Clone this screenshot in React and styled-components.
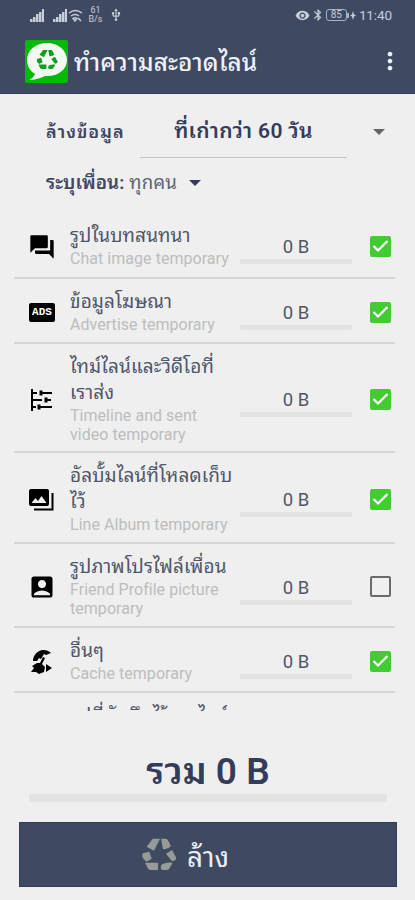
import React from "react";
import styled, { createGlobalStyle } from "styled-components";
import { MdForum, MdAccountBox, MdMoreVert, MdBluetooth, MdUsb, MdVisibility } from "react-icons/md";

const GlobalStyle = createGlobalStyle`
    *{
        box-sizing: border-box;
    }
    body{
        margin: 0;
        background-color: #efefef;
        font-family: Roboto, "Noto Sans Thai Looped", "Noto Looped Thai", Loma, Waree, Garuda, "Noto Sans Thai", "Noto Sans", sans-serif;
    }
    svg{
        display: block;
        flex-shrink: 0;
    }
`

const Screen = styled.div`
    width: 415px;
    height: 900px;
    display: flex;
    flex-direction: column;
    overflow: hidden;
    background-color: #efefef;
    color: #3e4760;
`

const Header = styled.header`
    height: 94px;
    background-color: #3f4962;
    border-bottom: 1px solid #343d57;
    color: #eef1f8;
`

const StatusBar = styled.div`
    height: 30px;
    display: flex;
    justify-content: space-between;
    padding: 0 23px 0 30px;
    color: #c9cedb;
`

const StatusGroup = styled.div`
    display: flex;
    align-items: center;
    gap: ${({ $gap }) => $gap}px;
`

const SignalGap = styled.span`
    width: 8px;
`

const Speed = styled.div`
    width: 15px;
    font-size: 9px;
    line-height: 9px;
    text-align: center;
    margin: 0 6px 0 5px;
`

const Battery = styled.div`
    width: 21px;
    height: 12px;
    border: 1px solid #a9b0c2;
    border-radius: 3px;
    font-size: 10px;
    line-height: 10px;
    text-align: center;
`

const BatteryTip = styled.span`
    width: 2px;
    height: 5px;
    background-color: #a9b0c2;
    margin-left: -1px;
`

const Clock = styled.span`
    font-size: 13.5px;
    letter-spacing: -.1px;
    margin-left: 2px;
`

const AppBar = styled.div`
    height: 64px;
    display: flex;
    align-items: center;
    padding: 0 11px 2px 24px;
`

const Title = styled.h1`
    flex: 1;
    margin: 4px 0 0 5px;
    font-size: 24.3px;
    font-weight: 500;
    line-height: 34px;
    letter-spacing: .1px;
    white-space: nowrap;
`

const Filter = styled.div`
    height: 65px;
    display: flex;
    padding-left: 46px;
`

const FilterLabel = styled.div`
    width: 94px;
    font-size: 18px;
    font-weight: 600;
    line-height: 24px;
    letter-spacing: 1px;
    padding-top: 26px;
    white-space: nowrap;
`

const FilterSelect = styled.div`
    width: 207px;
    height: 64px;
    border-bottom: 1px solid #c5c5c5;
    font-size: 21px;
    font-weight: 600;
    line-height: 26px;
    letter-spacing: .35px;
    padding-top: 24px;
    text-align: center;
    white-space: nowrap;
    color: #343c5a;
`

const Caret = styled.span`
    width: 0;
    height: 0;
    border-left: 6px solid transparent;
    border-right: 6px solid transparent;
    border-top: 6px solid ${({ $color }) => $color};
    margin: ${({ $margin }) => $margin};
`

const Friends = styled.div`
    height: 53px;
    display: flex;
    align-items: flex-start;
    padding: 12px 0 0 46px;
    font-size: 18.7px;
    line-height: 24px;
    letter-spacing: .1px;
    white-space: nowrap;
    color: #62646d;
    b{
        font-weight: 600;
        color: #3e4760;
        margin-right: 5px;
    }
`

const List = styled.div`
    height: 499px;
    overflow: hidden;
    padding: 0 20px 0 14px;
`

const Row = styled.div`
    height: ${({ $height }) => $height}px;
    display: flex;
    align-items: center;
    border-bottom: 2px solid #d6d6d6;
`

const IconCell = styled.div`
    width: 56px;
    display: flex;
    justify-content: center;
    padding-top: 4px;
    color: #000;
`

const Texts = styled.div`
    width: 170px;
    padding-top: 2px;
    white-space: nowrap;
`

const Name = styled.div`
    font-size: 19px;
    line-height: 26px;
    color: #50566a;
    letter-spacing: .1px;
`

const Detail = styled.div`
    font-size: 16px;
    line-height: 19px;
    letter-spacing: .04px;
    color: #bdbdbd;
`

const Size = styled.div`
    width: 112px;
    padding-top: 11px;
    text-align: center;
    font-size: 18.5px;
    line-height: 23px;
    color: #50566a;
`

const Track = styled.div`
    height: ${({ $height }) => $height}px;
    border-radius: 1px;
    background-color: #e3e3e3;
`

const Check = styled.div`
    width: 21px;
    height: 21px;
    margin: ${({ $on }) => ($on ? 4 : 2)}px 0 0 18px;
    border-radius: 2px;
    border: 2px solid ${({ $on }) => ($on ? "#42cc32" : "#6a6a6a")};
    background-color: ${({ $on }) => ($on ? "#42cc32" : "transparent")};
`

const AdsBadge = styled.div`
    width: 26px;
    height: 19px;
    border-radius: 2px;
    background-color: #000;
    color: #fff;
    font: bold 11px/19px "Liberation Mono", monospace;
    text-align: center;
`

const Total = styled.div`
    height: 111px;
    padding: 38px 28px 0 29px;
    text-align: center;
    font-size: 37px;
    font-weight: 600;
    line-height: 45px;
    color: #343c5a;
`

const CleanButton = styled.button`
    width: 378px;
    height: 65px;
    margin-left: 19px;
    display: flex;
    align-items: center;
    border: 1px solid #343d57;
    background-color: #3f4962;
    color: #e8edf8;
    font-family: inherit;
    font-size: 28px;
    padding: 0 0 0 121px;
    gap: 10px;
`

const RecyclePaths = () => (
    <>
        <path d="M456 321h22l-18 36-22-12z" />
        <path d="M481 321h14q5 0 7 5l9 18q-12 11-24 8z" />
        <path d="M426 365l20-5 7 21-15 9q-17-10-12-25z" />
        <path d="M433 393h39v22h-22q-6 0-9-6z" />
        <path d="M484 398q14-8 32-5l-9 16q-3 6-9 6h-14q-8-8 0-17z" />
        <path d="M496 366l18-11 12 22q2 10-12 12z" />
    </>
)

const Recycle = () => (
    <svg width="36" height="34" viewBox="421 319 108 102" fill="#979b98">
        <RecyclePaths />
    </svg>
)

const Logo = () => (
    <svg width="45" height="45" viewBox="0 0 45 45">
        <rect x="1" y="1" width="43" height="43" rx="2" fill="#05b909" />
        <path d="M23 4C12 4 3 11 3 21c0 6 3 11 8 14-1 3-4 5-6 6 6 0 12-2 16-4 12 1 22-6 22-16S34 4 23 4z" fill="#f4f8f2" />
        <svg x="12" y="10" width="22" height="21" viewBox="421 317 108 102" fill="#119d22">
            <RecyclePaths />
        </svg>
    </svg>
)

const Signal = () => (
    <svg width="15" height="13" viewBox="0 0 15 13" fill="currentColor">
        <path d="M0 10h2.500v3H0zM3 8h2.500v5H3zM6 5h2.500v8H6zM9 3h2.500v10H9zM12 0h2v13h-2z" />
    </svg>
)

const Wifi = () => (
    <svg width="15" height="13" viewBox="0 0 15 13" fill="none" stroke="currentColor" strokeWidth="1.5">
        <path d="M1 4q6.500-5 13 0M3 7q4.500-3 8 0M5 9.500q2-1.500 4 0L7 12zM10 9l3 3" />
    </svg>
)

const Bolt = () => (
    <svg width="6" height="9" viewBox="0 0 6 9" fill="currentColor">
        <path d="M3 0l1 3.500 2 1-2 1L3 9 2 5.500l-2-1 2-1z" />
    </svg>
)

const Timeline = () => (
    <svg width="22" height="22" viewBox="0 0 22 22" stroke="#000" strokeWidth="2" fill="none">
        <path d="M1 0v22M1 4h5m3 0h12M1 11h10m4 0h5M1 18h4m3 0h13" />
        <path d="M10 1.500v5M15 8.500v5M8 15.500v5" strokeWidth="3" />
    </svg>
)

const Album = () => (
    <svg width="26" height="22" viewBox="0 0 26 22">
        <path d="M2 0h16q2 0 2 2v13q0 2-2 2H2q-2 0-2-2V2q0-2 2-2z" />
        <path d="M2.500 14l4-5 2.500 3 3.500-5 5 7z" fill="#efefef" />
        <path d="M23.500 4v16.500H5" fill="none" stroke="#000" strokeWidth="2" />
    </svg>
)

const Cache = () => (
    <svg width="22" height="24" viewBox="0 0 22 24">
        <path d="M2 11C2 5 7 0 12 0c4 0 6 1 8 3l-5 2-2-1-3 5-2-1-2 3z" />
        <path d="M12 7l2 1-3 6 3 3-1 5-5 2-3-2-5 0 3-4-2-2 5-3 3 0z" />
        <path d="M15 14l6 4-6 4z" />
    </svg>
)

const Tick = () => (
    <svg width="17" height="17" viewBox="0 0 17 17" fill="none" stroke="#fff" strokeWidth="2.2">
        <path d="M1.500 8l4.500 4.500 9.500-9.500" />
    </svg>
)

const items = [
    { height: 67, icon: <MdForum size={28} />, name: ["รูปในบทสนทนา"], detail: ["Chat image temporary"], on: true },
    { height: 65, icon: <AdsBadge>ADS</AdsBadge>, name: ["ข้อมูลโฆษณา"], detail: ["Advertise temporary"], on: true },
    { height: 109, icon: <Timeline />, name: ["ไทม์ไลน์และวิดีโอที่", "เราส่ง"], detail: ["Timeline and sent", "video temporary"], on: true },
    { height: 91, icon: <Album />, name: ["อัลบั้มไลน์ที่โหลดเก็บ", "ไว้"], detail: ["Line Album temporary"], on: true },
    { height: 84, icon: <MdAccountBox size={28} />, name: ["รูปภาพโปรไฟล์เพื่อน"], detail: ["Friend Profile picture", "temporary"], on: false },
    { height: 65, icon: <Cache />, name: ["อื่นๆ"], detail: ["Cache temporary"], on: true },
]

const Item = ({ height, icon, name, detail, on }) => (
    <Row $height={height}>
        <IconCell>{icon}</IconCell>
        <Texts>
            {name.map((line) => <Name key={line}>{line}</Name>)}
            {detail.map((line) => <Detail key={line}>{line}</Detail>)}
        </Texts>
        <Size>
            0 B
            <Track $height={5} />
        </Size>
        <Check $on={on}>{on && <Tick />}</Check>
    </Row>
)

export default function App() {
    return (
        <Screen>
            <GlobalStyle />
            <Header>
                <StatusBar>
                    <StatusGroup $gap={0}>
                        <Signal />
                        <SignalGap />
                        <Signal />
                        <Wifi />
                        <Speed>61<br />B/s</Speed>
                        <MdUsb size={14} />
                    </StatusGroup>
                    <StatusGroup $gap={1}>
                        <MdVisibility size={15} />
                        <MdBluetooth size={14} />
                        <Battery>85</Battery>
                        <BatteryTip />
                        <Bolt />
                        <Clock>11:40</Clock>
                    </StatusGroup>
                </StatusBar>
                <AppBar>
                    <Logo />
                    <Title>ทำความสะอาดไลน์</Title>
                    <MdMoreVert size={28} />
                </AppBar>
            </Header>
            <Filter>
                <FilterLabel>ล้างข้อมูล</FilterLabel>
                <FilterSelect>ที่เก่ากว่า 60 วัน</FilterSelect>
                <Caret $color="#666" $margin="35px 0 0 26px" />
            </Filter>
            <Friends>
                <b>ระบุเพื่อน:</b>
                ทุกคน
                <Caret $color="#343c5a" $margin="9px 0 0 12px" />
            </Friends>
            <List>
                {items.map((item) => <Item key={item.name[0]} {...item} />)}
                <Row $height={65}>
                    <IconCell />
                    <Texts>
                        <Name>รูปที่บันทึกไว้จากไลน์</Name>
                        <Detail>&nbsp;</Detail>
                    </Texts>
                </Row>
            </List>
            <Total>
                รวม 0 B
                <Track $height={8} />
            </Total>
            <CleanButton>
                <Recycle />
                ล้าง
            </CleanButton>
        </Screen>
    )
}
